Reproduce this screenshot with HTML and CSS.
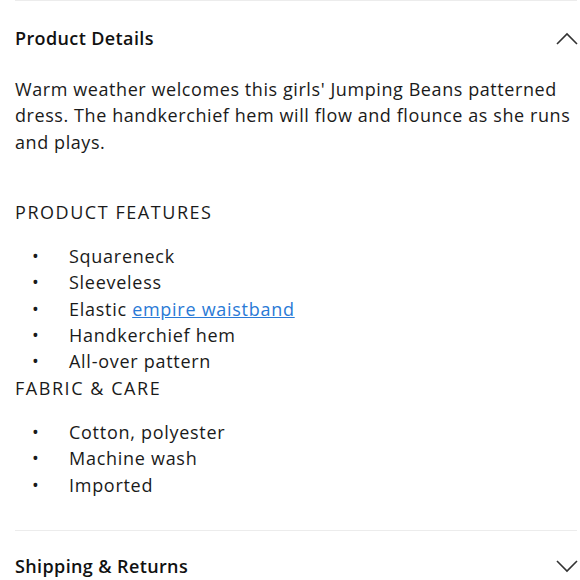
FILE: index.html
```html
<!DOCTYPE html>
<html>
<head>
<meta charset="utf-8">
<link rel="stylesheet" href="styles.css">
</head>
<body>
<div class="panel">
  <section class="section">
    <div class="header">
      <h2 class="title">Product Details</h2>
      <svg class="chev" width="22" height="13" viewBox="0 0 22 13"><polyline points="1,12 11,2 21,12" fill="none" stroke="#333" stroke-width="1.6"/></svg>
    </div>
    <div class="body">
      <p class="desc">Warm weather welcomes this girls' Jumping Beans patterned<br>dress. The handkerchief hem will flow and flounce as she runs<br>and plays.</p>
      <h3 class="sub first">PRODUCT FEATURES</h3>
      <ul class="list">
        <li class="item"><span class="dot">•</span><span>Squareneck</span></li>
        <li class="item"><span class="dot">•</span><span>Sleeveless</span></li>
        <li class="item"><span class="dot">•</span><span>Elastic <a class="link" href="#">empire waistband</a></span></li>
        <li class="item"><span class="dot">•</span><span>Handkerchief hem</span></li>
        <li class="item"><span class="dot">•</span><span>All-over pattern</span></li>
      </ul>
      <h3 class="sub">FABRIC &amp; CARE</h3>
      <ul class="list">
        <li class="item"><span class="dot">•</span><span>Cotton, polyester</span></li>
        <li class="item"><span class="dot">•</span><span>Machine wash</span></li>
        <li class="item"><span class="dot">•</span><span>Imported</span></li>
      </ul>
    </div>
  </section>
  <section class="section">
    <div class="header header-closed">
      <h2 class="title">Shipping &amp; Returns</h2>
      <svg class="chev" width="22" height="13" viewBox="0 0 22 13"><polyline points="1,1 11,11 21,1" fill="none" stroke="#333" stroke-width="1.6"/></svg>
    </div>
  </section>
</div>
</body>
</html>
```
FILE: styles.css
```css
html, body {
  margin: 0;
  padding: 0;
  background: #fff;
}
body {
  font-family: "Open Sans", "Liberation Sans", sans-serif;
  color: #1a1a1a;
  font-size: 18px;
  letter-spacing: 0.72px;
}
.panel {
  margin-left: 15px;
  width: 562px;
}
.section {
  border-top: 1px solid #ececec;
}
.header {
  display: flex;
  justify-content: space-between;
  align-items: center;
  padding: 24px 0 25px;
}
.header-closed {
  padding-top: 22px;
}
.title {
  margin: 0;
  font-size: 18px;
  font-weight: 600;
  line-height: 26px;
  letter-spacing: 0.38px;
  color: #111;
}
.chev {
  display: block;
  margin-right: -1px;
}
.body {
  padding-bottom: 32px;
}
.desc {
  margin: 0;
  line-height: 26.4px;
  letter-spacing: 0.58px;
  white-space: nowrap;
}
.sub {
  margin: 0;
  font-size: 18px;
  font-weight: 400;
  line-height: 26.4px;
  letter-spacing: 1.55px;
}
.sub.first {
  margin-top: 43.6px;
}
.list {
  list-style: none;
  margin: 17.6px 0 0;
  padding: 0;
}
.item {
  display: flex;
  line-height: 26.4px;
}
.dot {
  width: 54px;
  padding-left: 17px;
  box-sizing: border-box;
  flex: none;
}
.link {
  color: #2a7ad6;
  text-decoration: underline;
}
```
